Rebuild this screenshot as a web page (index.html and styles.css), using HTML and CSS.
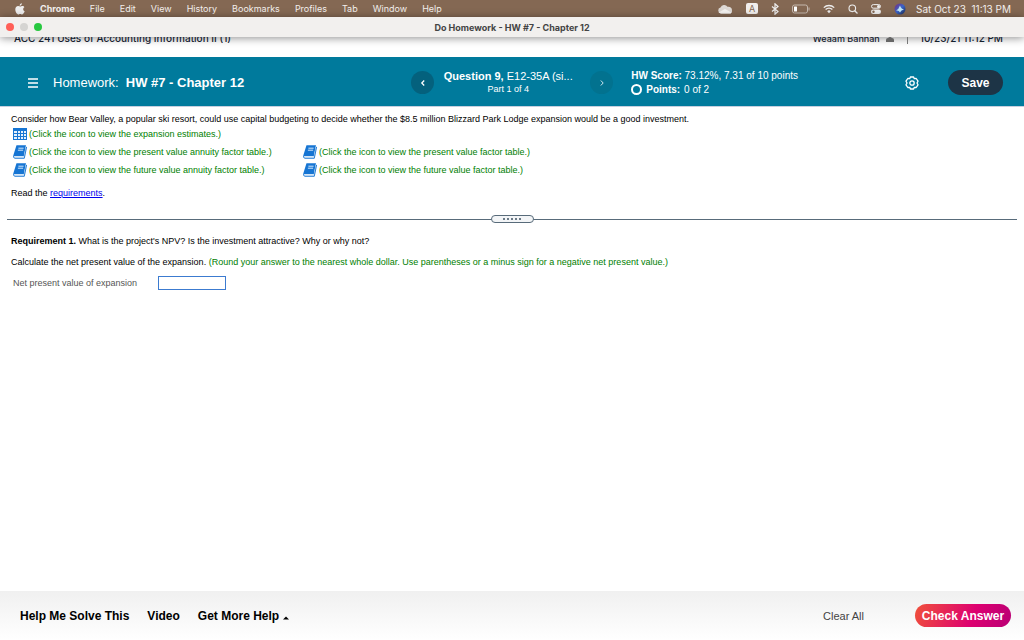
FILE: index.html
```html
<!DOCTYPE html>
<html lang="en">
<head>
    <title>Do Homework - HW #7 - Chapter 12</title>
    <meta charset="utf-8" />
    <meta name="viewport" content="width=device-width, initial-scale=1" />
    <link rel="stylesheet" href="styles.css">
</head>

<body>
    <!-- icons used more than once -->
    <svg class="defs" width="0" height="0">
        <symbol id="book" viewBox="0 0 14 14">
            <path d="M3.500.3H13L10.800 11H1.200Q.2 11 .5 9.800z" fill="#1675d3" />
            <path d="M13.200 1.500L11.200 12H1.200" fill="none" stroke="#a9cdf0" stroke-width="1" />
            <path d="M.5 10.500Q.2 13.300 2 13.300h9.300L13.600 2" fill="none" stroke="#1675d3" stroke-width=".9" />
            <path d="M5.400 3.200h5.200M4.900 5.200h5.200" stroke="#d5e8fb" stroke-width="1" />
        </symbol>
    </svg>

    <div class="menubar">
        <svg class="apple" viewBox="0 0 10 12" width="10" height="12">
            <path d="M6.900.3c0 1.300-1 2.500-2.200 2.400C4.600 1.500 5.700.4 6.900.3zM9.400 4.300C8.700 4.700 8.200 5.300 8.200 6.200c0 1.100.7 1.800 1.500 2.100-.5 1.500-1.500 3.100-2.500 3.100-.8 0-1-.5-2-.5s-1.200.5-2 .5C1.900 11.400.3 8.900.3 6.600c0-2.100 1.300-3.500 2.800-3.500.9 0 1.500.5 2.200.5.6 0 1.300-.6 2.300-.6.700 0 1.400.4 1.800 1.300z" fill="#eee" />
        </svg>
        <b>Chrome</b>
        <span>File</span>
        <span>Edit</span>
        <span>View</span>
        <span>History</span>
        <span>Bookmarks</span>
        <span>Profiles</span>
        <span>Tab</span>
        <span>Window</span>
        <span>Help</span>
        <div class="status">
            <svg viewBox="0 0 16 10" width="16" height="10">
                <path d="M4 9.500a3 3 0 0 1-.5-5.900A4 4 0 0 1 10.500 2.800 3.500 3.500 0 0 1 15 6.500a2.500 2.500 0 0 1-1.500 3z" fill="#ddd8d4" />
                <path d="M1.500 8.500L8 5l6.500 3.500-1 1H4z" fill="#f5f3f1" />
            </svg>
            <span class="keyboard">A</span>
            <svg viewBox="0 0 8 12" width="8" height="12">
                <path d="M1 3.500l6 5-3 2.700V.8l3 2.700-6 5" fill="none" stroke="#eee" stroke-width="1.200" />
            </svg>
            <svg viewBox="0 0 18 10" width="18" height="10">
                <rect x=".5" y="1" width="15" height="8" rx="2" fill="none" stroke="#c5b8ae" />
                <rect x="2" y="2.500" width="3" height="5" rx=".5" fill="#fff" />
                <path d="M17 3.500v3" stroke="#c5b8ae" />
            </svg>
            <svg viewBox="0 0 12 10" width="12" height="10">
                <path d="M.8 3.600a7.500 7.500 0 0 1 10.400 0M2.600 5.600a5 5 0 0 1 6.800 0" fill="none" stroke="#eee" stroke-width="1.300" />
                <path d="M4.200 7.200a2.600 2.600 0 0 1 3.600 0L6 9.300z" fill="#eee" />
            </svg>
            <svg viewBox="0 0 10 10" width="10" height="10">
                <circle cx="4.300" cy="4.300" r="3.300" fill="none" stroke="#eee" stroke-width="1.100" />
                <path d="M6.700 6.700L9.500 9.500" stroke="#eee" stroke-width="1.300" />
            </svg>
            <svg viewBox="0 0 10 10" width="10" height="10">
                <rect x=".5" y=".6" width="9" height="3.600" rx="1.800" fill="none" stroke="#eee" />
                <circle cx="7.500" cy="2.400" r="1.500" fill="#eee" />
                <rect x="0" y="5.400" width="10" height="4.600" rx="2.300" fill="#eee" />
                <circle cx="2.500" cy="7.700" r="1.200" fill="#846853" />
            </svg>
            <svg viewBox="0 0 12 12" width="12" height="12">
                <defs>
                    <linearGradient id="siri" x1="0" y1="0" x2="1" y2="1">
                        <stop offset="0" stop-color="#7a2a7a" />
                        <stop offset=".5" stop-color="#3a64c8" />
                        <stop offset="1" stop-color="#1a2a50" />
                    </linearGradient>
                </defs>
                <circle cx="6" cy="6" r="5.500" fill="url(#siri)" />
                <path d="M2 7.500Q5 6 6 2.500 7 6 10 6.500 7 7 6 9.500 5 7 2 7.500z" fill="#bfe6f5" />
            </svg>
        </div>
        <span class="clock">Sat Oct 23&nbsp; 11:13 PM</span>
    </div>

    <div class="titlebar">
        <div class="lights"><i class="close"></i><i class="minimize"></i><i class="zoom"></i></div>
        <div>Do Homework - HW #7 - Chapter 12</div>
    </div>

    <!-- course strip, partly scrolled under the title bar -->
    <div class="course">
        <div class="course-row">
            <span>ACC 241 Uses of Accounting Information II (1)</span>
            <span class="user">Weaam Bannan
                <svg viewBox="0 0 8 8" width="8" height="8"><circle cx="4" cy="2" r="2" fill="#666" /><path d="M0 8V6q0-2 2-2h4q2 0 2 2v2z" fill="#666" /></svg>
            </span>
            <span class="date">10/23/21 11:12 PM</span>
        </div>
    </div>

    <header>
        <div class="homework">
            <button class="menu" aria-label="Menu">
                <svg viewBox="0 0 12 10" width="12" height="10"><path d="M1 1h10M1 5h10M1 9h10" stroke="#fff" stroke-width="1.300" /></svg>
            </button>
            <span>Homework:</span>
            <b>HW #7 - Chapter 12</b>
        </div>
        <div class="question">
            <button class="round" aria-label="Previous question">
                <svg viewBox="0 0 6 8" width="6" height="8"><path d="M4.200 1.500L1.800 4l2.400 2.500" fill="none" stroke="#fff" stroke-width="1.300" /></svg>
            </button>
            <div class="question-name">
                <div><b>Question 9,</b> E12-35A (si...</div>
                <small>Part 1 of 4</small>
            </div>
            <button class="round next" aria-label="Next question">
                <svg viewBox="0 0 6 8" width="6" height="8"><path d="M1.800 1.500L4.200 4 1.800 6.500" fill="none" stroke="#cfe6ee" stroke-width="1" /></svg>
            </button>
        </div>
        <div class="score">
            <div><b>HW Score:</b> 73.12%, 7.31 of 10 points</div>
            <div class="points"><i></i><b>Points:</b> 0 of 2</div>
        </div>
        <button class="settings" aria-label="Settings">
            <svg viewBox="0 0 14 14" width="14" height="14" fill="none" stroke="#fff" stroke-width="1.300" stroke-linejoin="round">
                <path d="M5.400 1h3.200l.7 1.700 1.900-.2 1.800 2.700L12 7l1 1.800-1.800 2.700-1.900-.2-.7 1.700H5.400l-.7-1.700-1.900.2L1 8.800 2 7 1 5.200l1.800-2.700 1.900.2z" />
                <circle cx="7" cy="7" r="2.200" />
            </svg>
        </button>
        <button class="save">Save</button>
    </header>

    <main>
        <p class="intro">Consider how Bear Valley, a popular ski resort, could use capital budgeting to decide whether the $8.5 million Blizzard Park Lodge expansion would be a good investment.</p>
        <div class="links">
            <a href="#estimates" class="wide">
                <svg viewBox="0 0 14 12" width="14" height="12">
                    <rect x="0" y="0" width="14" height="12" fill="#1675d3" />
                    <path d="M1 3h3v2H1zM5 3h2v2H5zM8 3h2v2H8zM11 3h2v2h-2zM1 6h3v2H1zM5 6h2v2H5zM8 6h2v2H8zM11 6h2v2h-2zM1 9h3v2H1zM5 9h2v2H5zM8 9h2v2H8zM11 9h2v2h-2z" fill="#e4f0fc" />
                </svg>
                (Click the icon to view the expansion estimates.)
            </a>
            <a href="#pva"><svg width="14" height="14"><use href="#book" /></svg>(Click the icon to view the present value annuity factor table.)</a>
            <a href="#pv"><svg width="14" height="14"><use href="#book" /></svg>(Click the icon to view the present value factor table.)</a>
            <a href="#fva"><svg width="14" height="14"><use href="#book" /></svg>(Click the icon to view the future value annuity factor table.)</a>
            <a href="#fv"><svg width="14" height="14"><use href="#book" /></svg>(Click the icon to view the future value factor table.)</a>
        </div>
        <p class="read">Read the <a href="#requirements">requirements</a>.</p>

        <div class="divider"><button class="grip" aria-label="Resize"><i></i><i></i><i></i><i></i><i></i></button></div>

        <p class="requirement"><b>Requirement 1.</b> What is the project's NPV? Is the investment attractive? Why or why not?</p>
        <p class="calculate">Calculate the net present value of the expansion. <span class="hint">(Round your answer to the nearest whole dollar. Use parentheses or a minus sign for a negative net present value.)</span></p>
        <div class="answer">
            <label for="npv">Net present value of expansion</label>
            <input id="npv" type="text" />
        </div>
    </main>

    <footer>
        <button>Help Me Solve This</button>
        <button>Video</button>
        <button>Get More Help <svg viewBox="0 0 6 4" width="6" height="4"><path d="M0 3.500L3 .5l3 3z" /></svg></button>
        <button class="clear">Clear All</button>
        <button class="check">Check Answer</button>
    </footer>
</body>

</html>
```

FILE: styles.css
```css
* {
    box-sizing: border-box;
}

body {
    margin: 0;
    min-height: 100vh;
    display: flex;
    flex-direction: column;
    background: white;
    color: black;
    font-family: 'Liberation Sans', Arial, Helvetica, sans-serif;
    font-size: 9px;
}

button {
    padding: 0;
    border: 0;
    background: none;
    font: inherit;
    color: inherit;
}

svg {
    display: block;
    flex: none;
}

p {
    margin: 0;
    line-height: 12px;
}

.defs {
    position: absolute;
}

/* system menu bar and window title */

.menubar {
    display: flex;
    align-items: center;
    gap: 15px;
    height: 17px;
    padding: 0 13px 0 15px;
    background: #846853;
    color: #f3efec;
    font-family: Inter, sans-serif;
    white-space: nowrap;
}

.status {
    display: flex;
    align-items: center;
    gap: 13px;
    margin-left: auto;
}

.keyboard {
    width: 12px;
    height: 11px;
    border-radius: 2px;
    background: #f1eeec;
    color: #846853;
    line-height: 11px;
    text-align: center;
}

.clock {
    margin-left: -5px;
    font-size: 10px;
}

.titlebar {
    display: flex;
    align-items: center;
    height: 20px;
    padding: 0 6px;
    background: #f2f0ee;
    box-shadow: 0 1px 8px rgba(0, 0, 0, .45);
    font-family: Inter, sans-serif;
    font-weight: bold;
    color: #444;
}

.titlebar::after {
    content: "";
    flex: 1;
}

.lights {
    display: flex;
    flex: 1;
    gap: 6px;
}

.lights i {
    width: 8px;
    height: 8px;
    border-radius: 50%;
}

.close { background: #ff5f57; }
.minimize { background: #d5d4d2; }
.zoom { background: #28c840; }

/* course strip */

.course {
    height: 20px;
    overflow: hidden;
    font-family: Inter, sans-serif;
    font-size: 10px;
    font-weight: 500;
    color: #14202e;
}

.course-row {
    display: flex;
    align-items: center;
    height: 12px;
    margin: -5px 21px 0 14px;
}

.user {
    display: flex;
    align-items: center;
    gap: 6px;
    margin-left: auto;
    padding-right: 13px;
    border-right: 1px solid #777;
    font-size: 9px;
}

.date {
    padding-left: 12px;
}

/* homework header */

header {
    display: flex;
    align-items: center;
    height: 50px;
    padding: 2px 21px 0 0;
    border-bottom: 1px solid #c6cfdf;
    background: #007a9c;
    color: white;
    white-space: nowrap;
}

.homework {
    display: flex;
    flex: none;
    align-items: center;
    width: 41%;
    padding-left: 27px;
    font-size: 13px;
}

.menu {
    margin-right: 14px;
}

.homework b {
    margin-left: 7px;
}

.question {
    display: flex;
    flex: none;
    align-items: center;
    gap: 7px;
    margin-right: 18px;
}

.question-name {
    width: 134px;
    font-size: 11px;
    line-height: 13px;
    text-align: center;
}

.question-name small {
    display: block;
    font-size: 9px;
}

.round {
    display: grid;
    place-items: center;
    width: 23px;
    height: 23px;
    border-radius: 50%;
    background: #04617d;
}

.next {
    margin-left: 8px;
    background: #02728f;
}

.score {
    line-height: 14px;
    font-size: 10px;
}

.points {
    display: flex;
    align-items: center;
    gap: 4px;
}

.points i {
    width: 11px;
    height: 11px;
    border: 2px solid white;
    border-radius: 50%;
}

.settings {
    margin-left: auto;
}

.save {
    width: 55px;
    height: 25px;
    margin-left: 29px;
    border-radius: 13px;
    background: #1d3446;
    font-size: 12px;
    font-weight: bold;
}

/* question text */

main {
    flex: 1;
    padding: 6px 7px 0;
}

main p {
    margin-left: 4px;
}

.links {
    display: grid;
    grid-template-columns: 290px auto;
    row-gap: 4px;
    margin: 2px 0 0 6px;
}

.links a {
    display: flex;
    align-items: center;
    gap: 2px;
    height: 14px;
    color: #008000;
    text-decoration: none;
}

.links .wide {
    grid-column: 1 / 3;
}

.read {
    margin-top: 10px;
}

.read a {
    color: #00e;
}

.divider {
    display: grid;
    place-items: center;
    height: 8px;
    margin: 16px 0 12px;
    background: linear-gradient(#586b7a, #586b7a) center / 100% 1px no-repeat;
}

.grip {
    display: flex;
    align-items: center;
    justify-content: center;
    gap: 2px;
    width: 43px;
    height: 8px;
    border: 1px solid #586b7a;
    border-radius: 4px;
    background: #f3f5f7;
}

.grip i {
    width: 2px;
    height: 2px;
    background: #6b7a87;
}

.calculate {
    margin-top: 9px;
}

.hint {
    color: #008000;
}

.answer {
    display: flex;
    align-items: center;
    gap: 21px;
    margin: 8px 0 0 6px;
    color: #555;
}

.answer input {
    width: 68px;
    height: 14px;
    padding: 0 2px;
    border: 1px solid #3c7bd0;
    font: inherit;
}

/* bottom bar */

footer {
    display: flex;
    align-items: center;
    gap: 18px;
    height: 49px;
    padding: 0 13px 0 20px;
    background: linear-gradient(#f0f0f0, #fff);
    font-size: 12px;
    font-weight: bold;
}

footer svg {
    display: inline-block;
    vertical-align: baseline;
}

.clear {
    margin-left: auto;
    color: #444;
    font-size: 11px;
    font-weight: normal;
}

.check {
    width: 96px;
    height: 23px;
    margin-left: 33px;
    border-radius: 12px;
    background: linear-gradient(110deg, #f0513a, #dd0070 60%, #b80075);
    color: white;
}
```
